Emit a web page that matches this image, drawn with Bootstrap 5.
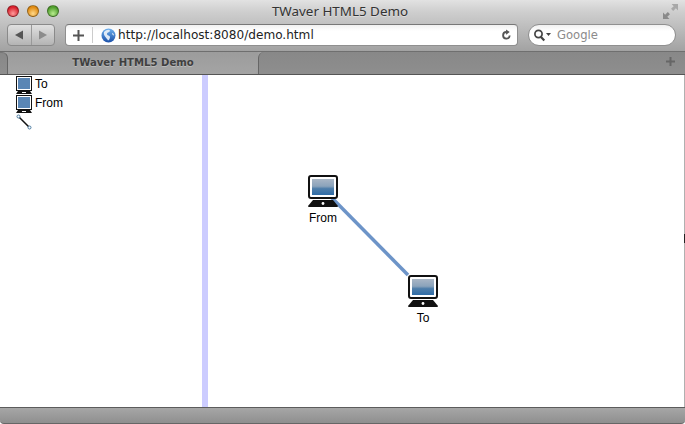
<!DOCTYPE html>
<html lang="en"><head><meta charset="utf-8"><title>TWaver HTML5 Demo</title>
<link href="https://cdn.jsdelivr.net/npm/bootstrap@5.3.0/dist/css/bootstrap.min.css" rel="stylesheet">
<style>
html,body{height:100%;margin:0;overflow:hidden;background:#fff}
.win{width:685px;height:424px;font-family:"Liberation Sans",sans-serif;color:#000}
.chrome{height:52px;background:linear-gradient(#e2e2e2,#cfcfcf 22%,#a2a2a2);border-bottom:1px solid #6f6f6f}
.titlebar{height:20px;padding-left:7px}
.lights{gap:8px;width:52px;padding-top:2px}
.light{width:12px;height:12px;border-radius:50%;border:1px solid rgba(0,0,0,.35)}
.lr{background:radial-gradient(circle at 50% 75%,#ff9c9c,#d8202c 70%)}
.ly{background:radial-gradient(circle at 50% 75%,#ffd98a,#e08a10 70%)}
.lg{background:radial-gradient(circle at 50% 75%,#b8ec8e,#4f9e2c 70%)}
.wintitle{flex:1;text-align:center;font:13.4px "Noto Sans",sans-serif;color:#333;padding-right:42px;text-shadow:0 1px 0 #ddd;line-height:20px;padding-top:1px}
.resize{width:22px;padding-top:4px}
.toolbar{height:25px;padding:4px 9px 0 7px;gap:10px}
.backfwd{width:48px;height:22px;border:1px solid #8a8a8a;border-radius:4px;background:linear-gradient(#e0e0e0,#b4b4b4)}
.backfwd>div{flex:1;justify-content:center}
.backfwd>div+div{border-left:1px solid #999}
.addr{width:453px;height:22px;background:linear-gradient(#f0f0f0,#fff 30%);border:1px solid #8f8f8f;border-top-color:#777;border-radius:4px;font:12.1px "DejaVu Sans",sans-serif;color:#222;padding:0 5px 0 7px}
.addsep{width:1px;height:16px;background:#ccc;margin:0 8px}
.url{flex:1;margin-left:2px}
.search{flex:1;height:22px;background:linear-gradient(#f0f0f0,#fff 30%);border:1px solid #8f8f8f;border-radius:11px;padding-left:4px;font:11.6px "DejaVu Sans",sans-serif;color:#8b8b8b}
.tabbar{height:23px;background:#a0a0a0;border-bottom:1px solid #555}
.tabstub{width:8px;background:linear-gradient(#888,#8e8e8e);border-top:1px solid #777;border-right:1px solid #666;border-top-right-radius:6px}
.tabact{width:250px;height:22px;background:linear-gradient(#9c9c9c,#a4a4a4);border-bottom-left-radius:6px;border-bottom-right-radius:6px;font:bold 10.1px "DejaVu Sans",sans-serif;color:#3f3f3f;text-align:center;line-height:22px;text-shadow:0 1px 0 #bbb}
.tabfill{flex:1;background:linear-gradient(#888,#8e8e8e);border-left:1px solid #666;border-top-left-radius:6px;padding:5px 10px 0 0;text-align:right;line-height:0}
.main{height:332px}
.side{width:202px;padding:1px 0 0 16px;font-size:12px;color:#000}
.treerow{height:19px;gap:3px;line-height:16px}
.split{width:6px;background:#ccf}
.canvasarea{flex:1;position:relative;border-right:1px solid #b0b0b0}
.wire{position:absolute;left:0;top:0}
.edgetick{position:absolute;right:-1px;top:159px;width:1px;height:9px;background:#222}
.node{position:absolute;width:60px;text-align:center;font-size:12px;line-height:14px;color:#000}
.node svg{display:block;margin:0 auto 4px}
.nf{left:85px;top:100px}
.nt{left:185px;top:200px}
.status{height:17px;background:linear-gradient(#a6a6a6,#8f8f8f);border-top:1px solid #5c5c5c;border-bottom:1px solid #666;border-radius:0 0 4px 4px}
</style></head>
<body>
<svg width="0" height="0" class="position-absolute"><defs>
<linearGradient id="scr" x1="0" y1="0" x2="0" y2="1"><stop offset="0" stop-color="#a9b6c6"/><stop offset=".45" stop-color="#8ba3bb"/><stop offset=".6" stop-color="#4f7eaa"/><stop offset="1" stop-color="#2f6ca6"/></linearGradient>
<linearGradient id="glb" x1="0" y1="0" x2="0" y2="1"><stop offset="0" stop-color="#6fb1ee"/><stop offset="1" stop-color="#1a4fa8"/></linearGradient>
<symbol id="pc" viewBox="0 0 30 32">
 <rect x="1" y="1" width="28" height="22" rx="2" fill="#fff" stroke="#111" stroke-width="2"/>
 <rect x="4" y="4" width="22" height="16" fill="url(#scr)"/>
 <path d="M5 25h20l5 6a1 1 0 0 1-1 1H1a1 1 0 0 1-1-1z" fill="#111"/>
 <circle cx="15" cy="28.500" r="1.400" fill="#fff"/>
</symbol>
<symbol id="pcs" viewBox="0 0 16 18">
 <rect x=".5" y=".5" width="15" height="14" fill="#fff" stroke="#111"/>
 <rect x="2" y="2" width="12" height="11" fill="#5a86b5"/>
 <path d="M2 15h12l2 3H0z" fill="#111"/>
 <rect x="6" y="16" width="4" height="1" fill="#fff"/>
</symbol>
</defs></svg>
<div class="win d-flex flex-column">
 <div class="chrome flex-shrink-0">
  <div class="titlebar d-flex align-items-center">
   <div class="lights d-flex"><span class="light lr"></span><span class="light ly"></span><span class="light lg"></span></div>
   <div class="wintitle">TWaver HTML5 Demo</div>
   <div class="resize d-flex align-self-start">
    <svg width="15" height="15" viewBox="0 0 14 14"><path d="M8 0h6v6l-2-2-2.500 2.500L7.500 4.500 10 2z" fill="#a8a8a8"/><path d="M0 8l2 2 2.500-2.500 2 2L4 12l2 2H0z" fill="#8a8a8a"/></svg>
   </div>
  </div>
  <div class="toolbar d-flex">
   <div class="backfwd d-flex">
    <div class="d-flex align-items-center"><svg width="10" height="10" viewBox="0 0 10 10"><path d="M1 5 9 .5v9z" fill="#555"/></svg></div>
    <div class="d-flex align-items-center"><svg width="10" height="10" viewBox="0 0 10 10"><path d="M9 5 1 .5v9z" fill="#8c8c8c"/></svg></div>
   </div>
   <div class="addr d-flex align-items-center">
    <svg width="11" height="11" viewBox="0 0 11 11"><path d="M4.500 0h2v4.500h4.500v2H6.500V11h-2V6.500H0v-2h4.500z" fill="#555"/></svg>
    <span class="addsep"></span>
    <svg width="15" height="15" viewBox="0 0 15 15"><circle cx="7.500" cy="7.500" r="7" fill="url(#glb)"/><path d="M3 4c2-2 5-3 6-1.500 0 2-3 1.500-3 3.500 0 2 3 1 3 3 0 1.500-1 3-2 3.500C6 10 2 8 3 4zM11 5c1 0 2 1 2 2.500-1 0-2-1-2-2.500z" fill="#dfeaf6"/></svg>
    <span class="url">http://localhost:8080/demo.html</span>
    <svg width="11" height="12" viewBox="0 0 12 12"><path d="M9.500 6.500A3.600 3.600 0 1 1 6 2.700" fill="none" stroke="#555" stroke-width="2"/><path d="M5.500 0l4 2.800-4 2.800z" fill="#555"/></svg>
   </div>
   <div class="search d-flex align-items-center">
    <svg width="20" height="13" viewBox="0 0 20 13"><circle cx="5.500" cy="5" r="3.600" fill="none" stroke="#444" stroke-width="1.700"/><path d="M8 8l3.300 3.500" stroke="#444" stroke-width="2.200"/><path d="M13 4h5l-2.500 3z" fill="#444"/></svg>
    <span class="ms-1">Google</span>
   </div>
  </div>
 </div>
 <div class="tabbar flex-shrink-0 d-flex">
  <div class="tabstub"></div>
  <div class="tabact">TWaver HTML5 Demo</div>
  <div class="tabfill"><svg width="9" height="9" viewBox="0 0 9 9"><path d="M3.500 0h2v3.500H9v2H5.500V9h-2V5.500H0v-2h3.500z" fill="#666"/></svg></div>
 </div>
 <div class="main d-flex">
  <div class="side">
   <div class="treerow d-flex"><svg width="16" height="18" viewBox="0 0 16 18"><use href="#pcs"/></svg><span>To</span></div>
   <div class="treerow d-flex"><svg width="16" height="18" viewBox="0 0 16 18"><use href="#pcs"/></svg><span>From</span></div>
   <div class="treerow d-flex"><svg width="16" height="16" viewBox="0 0 16 16"><path d="M3 3 13 13" stroke="#111" stroke-width="1.500"/><circle cx="2.500" cy="2.500" r="1.500" fill="#fff" stroke="#4a7aa0"/><circle cx="13.500" cy="13.500" r="1.500" fill="#fff" stroke="#4a7aa0"/></svg></div>
  </div>
  <div class="split"></div>
  <div class="canvasarea">
   <svg class="wire" width="476" height="332"><path d="M122 121 200 200" stroke="#6d94c8" stroke-width="3.500"/></svg>
   <div class="node nf"><svg width="30" height="32" viewBox="0 0 30 32"><use href="#pc"/></svg>From</div>
   <div class="node nt"><svg width="30" height="32" viewBox="0 0 30 32"><use href="#pc"/></svg>To</div>
   <div class="edgetick"></div>
  </div>
 </div>
 <div class="status flex-shrink-0"></div>
</div>
<script src="https://cdn.jsdelivr.net/npm/bootstrap@5.3.0/dist/js/bootstrap.bundle.min.js"></script>
</body></html>
